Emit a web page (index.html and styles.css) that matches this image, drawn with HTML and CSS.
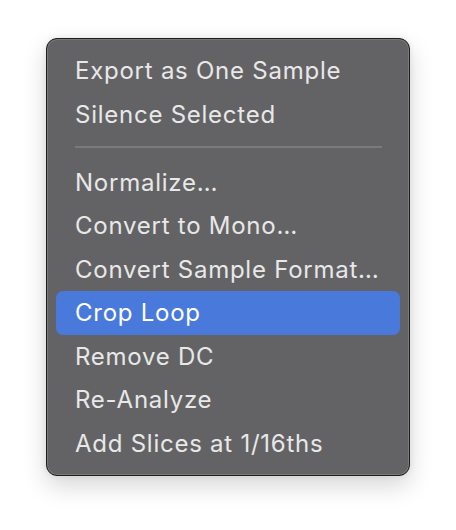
FILE: index.html
```html
<!DOCTYPE html>
<html>
<head>
<meta charset="utf-8">
<link rel="stylesheet" href="styles.css">
</head>
<body>
<div class="menu">
  <div class="item">Export as One Sample</div>
  <div class="item">Silence Selected</div>
  <div class="sep"></div>
  <div class="item">Normalize…</div>
  <div class="item">Convert to Mono…</div>
  <div class="item">Convert Sample Format…</div>
  <div class="item active">Crop Loop</div>
  <div class="item">Remove DC</div>
  <div class="item">Re-Analyze</div>
  <div class="item">Add Slices at 1/16ths</div>
</div>
</body>
</html>
```
FILE: styles.css
```css
html, body {
  margin: 0;
  padding: 0;
  background: #ffffff;
}
body {
  width: 456px;
  height: 530px;
  overflow: hidden;
  padding: 38px 0 0 46px;
  box-sizing: border-box;
}
.menu {
  width: 364px;
  height: 438px;
  box-sizing: border-box;
  background: #636365;
  border: 1px solid #1e1e1e;
  border-radius: 11px;
  box-shadow: inset 0 0 0 1px #7a7a7c, 0 10px 24px rgba(0,0,0,0.16), 0 0 6px rgba(0,0,0,0.08);
  padding: 10px 9px 9px 9px;
  display: flex;
  flex-direction: column;
  font-family: Inter, "Liberation Sans", Arial, sans-serif;
  font-size: 24px;
  letter-spacing: 0.75px;
  color: #e8e8e8;
}
.item {
  height: 43.5px;
  line-height: 44.5px;
  padding-left: 19px;
  border-radius: 7px;
  white-space: nowrap;
  flex: none;
}
.item.active {
  background: #4a79dc;
  color: #ffffff;
}
.sep {
  height: 24.5px;
  flex: none;
  margin: 0 18px 0 19px;
  display: flex;
  align-items: center;
}
.sep::before {
  content: "";
  display: block;
  width: 100%;
  height: 2px;
  margin-top: -3px;
  background: #7a7a7c;
}
```
